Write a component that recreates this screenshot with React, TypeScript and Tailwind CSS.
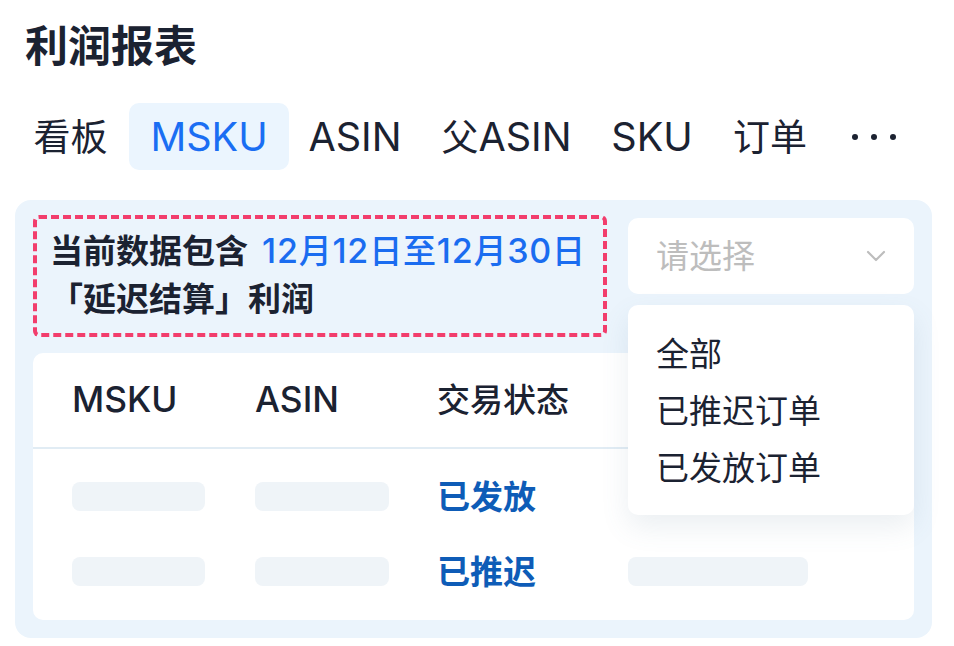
import { ChevronDown } from 'lucide-react'

// latin runs are set a bit larger than the CJK text, like the original font does
function L({ children, s = 'text-[1.07em]' }: { children: string; s?: string }) {
  return <span className={`font-['Inter'] ${s}`}>{children}</span>
}

const tabs = [
  { label: <>看板</>, w: 'w-[117px]' },
  { label: <L>MSKU</L>, w: 'w-[160px]', active: true },
  { label: <L>ASIN</L>, w: 'w-[132px]' },
  { label: <>父<L>ASIN</L></>, w: 'w-[171px]' },
  { label: <L>SKU</L>, w: 'w-[120px]' },
  { label: <>订单</>, w: 'w-[116px]' },
]

const options = ['全部', '已推迟订单', '已发放订单']

function Skeleton({ w }: { w: string }) {
  return <div className={`h-[29px] ${w} rounded-[8px] bg-[#eff4f8]`} />
}

export default function App() {
  return (
    <div className="relative h-[646px] w-[954px] overflow-hidden bg-white font-['Noto_Sans','Noto_Sans_CJK_SC',sans-serif] text-[#1b2231]">
      <h1 className="pl-[25px] pt-[20px] text-[43px] font-bold leading-[52px]">利润报表</h1>

      {/* tabs */}
      <nav className="mt-[31px] flex h-[67px] items-center pl-[12px] text-[37px] leading-[50px]">
        {tabs.map((t, i) => (
          <div
            key={i}
            className={`flex h-[67px] ${t.w} items-center justify-center rounded-[10px] ${
              t.active ? 'bg-[#ebf5fe] text-[#1a6ef3]' : ''
            }`}
          >
            <span>{t.label}</span>
          </div>
        ))}
        <div className="ml-[24px] flex items-center gap-[13px]">
          <span className="h-[6px] w-[6px] rounded-full bg-[#1b2231]" />
          <span className="h-[6px] w-[6px] rounded-full bg-[#1b2231]" />
          <span className="h-[6px] w-[6px] rounded-full bg-[#1b2231]" />
        </div>
      </nav>

      {/* card */}
      <section className="mx-[15px] mt-[30px] h-[438px] w-[917px] rounded-[16px] bg-[#ebf4fc] px-[18px] pt-[15px]">
        <div className="flex items-start gap-[21px]">
          <div className="h-[122px] w-[574px] rounded-[6px] border-[4px] border-dashed border-[#f23d6c] pl-[13px] pt-[8px] text-[33px] font-bold leading-[48px]">
            当前数据包含
            <span className="ml-[14px] font-medium tracking-[0.8px] text-[#1a6cf0]">
              <L s="text-[1.03em]">12</L>月<L s="text-[1.03em]">12</L>日至<L s="text-[1.03em]">12</L>月
              <L s="text-[1.03em]">30</L>日
            </span>
            <br />
            「延迟结算」利润
          </div>
          <div className="mt-[3px] flex h-[76px] w-[286px] items-center justify-between rounded-[10px] bg-white pl-[28px] pr-[22px] text-[33px] text-[#bdbdbd]">
            <span>请选择</span>
            <ChevronDown className="h-[32px] w-[32px] text-[#bdbdbd]" strokeWidth={1.6} />
          </div>
        </div>

        {/* table */}
        <div className="mt-[16px] h-[267px] rounded-[10px] bg-white">
          <div className="grid h-[96px] grid-cols-[183px_182px_191px_1fr] items-center border-b-2 border-[#e1ecf4] pl-[39px] text-[33px] font-medium">
            <L>MSKU</L>
            <L>ASIN</L>
            <span>交易状态</span>
            <span />
          </div>
          <div className="pt-[10px]">
            <div className="grid h-[75px] grid-cols-[183px_182px_191px_1fr] items-center pl-[39px]">
              <Skeleton w="w-[133px]" />
              <Skeleton w="w-[134px]" />
              <span className="text-[33px] font-bold text-[#0e5cb7]">已发放</span>
              <Skeleton w="w-[180px]" />
            </div>
            <div className="grid h-[75px] grid-cols-[183px_182px_191px_1fr] items-center pl-[39px]">
              <Skeleton w="w-[133px]" />
              <Skeleton w="w-[134px]" />
              <span className="text-[33px] font-bold text-[#0e5cb7]">已推迟</span>
              <Skeleton w="w-[180px]" />
            </div>
          </div>
        </div>
      </section>

      {/* dropdown */}
      <div className="absolute left-[628px] top-[305px] h-[210px] w-[286px] rounded-[10px] bg-white pl-[28px] pt-[20px] text-[33px] leading-[57px] text-[#1b2231] shadow-[0_12px_28px_rgba(90,120,150,0.12)]">
        {options.map((o) => (
          <div key={o}>{o}</div>
        ))}
      </div>
    </div>
  )
}
